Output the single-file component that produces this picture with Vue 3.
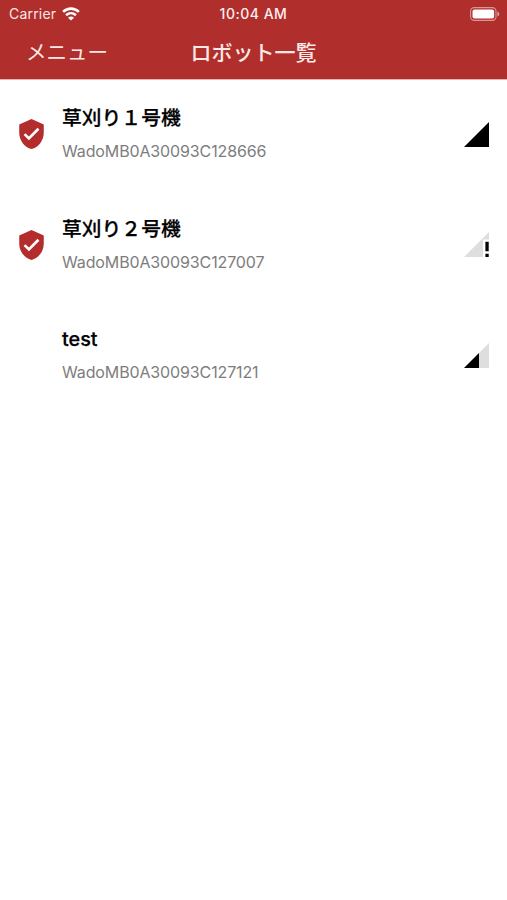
<script setup>
const robots = [
  { name: '草刈り１号機', id: 'WadoMB0A30093C128666', paired: true, signal: 'full' },
  { name: '草刈り２号機', id: 'WadoMB0A30093C127007', paired: true, signal: 'alert' },
  { name: 'test', id: 'WadoMB0A30093C127121', paired: false, signal: 'half' },
]
</script>

<template>
  <div class="screen">
    <header class="header">
      <div class="status">
        <div class="carrier">
          <span>Carrier</span>
          <svg class="wifi" viewBox="0 0 18 14" fill="none" stroke="#fff" stroke-width="2.6">
            <path d="M1.1 4.9C5.7.5 12.3.5 16.9 4.9" />
            <path d="M4.1 8.2C7 5.5 11 5.5 13.9 8.2" />
            <path d="M9 13.6 6 10.8Q9 8.4 12 10.8Z" fill="#fff" stroke="none" />
          </svg>
        </div>
        <span class="time">10:04 AM</span>
        <svg class="battery" viewBox="0 0 30 14">
          <rect x="0.6" y="0.6" width="25.4" height="12.8" rx="3.6" fill="none" stroke="#fff" stroke-opacity="0.5" stroke-width="1.1" />
          <rect x="2.5" y="2.4" width="21.6" height="9.2" rx="2" fill="#fff" />
          <path d="M27.4 4.6Q29.3 5.4 29.3 7T27.4 9.4Z" fill="#fff" fill-opacity="0.55" />
        </svg>
      </div>
      <nav class="nav">
        <span class="menu">メニュー</span>
        <h1 class="title">ロボット一覧</h1>
        <span></span>
      </nav>
    </header>
    <main class="list">
      <div v-for="robot in robots" :key="robot.id" class="row">
        <div class="badge">
          <svg v-if="robot.paired" class="shield" viewBox="3 1 18 22">
            <path d="M12 1 3 5v6c0 5.55 3.84 10.74 9 12 5.16-1.26 9-6.45 9-12V5z" fill="#b22d2b" />
            <path d="m6.9 12.1 3.2 3.1 7-7" fill="none" stroke="#fff" stroke-width="2" />
          </svg>
        </div>
        <div class="text">
          <div class="name">{{ robot.name }}</div>
          <div class="id">{{ robot.id }}</div>
        </div>
        <svg class="signal" viewBox="0 0 25 25">
          <path v-if="robot.signal === 'full'" d="M0 25 25 0V25Z" fill="#000" />
          <template v-else-if="robot.signal === 'alert'">
            <path d="M0 25 25 0V7.5H19V25Z" fill="#dedede" />
            <path d="M21.4 9.8h3.3v9.5h-3.3zM21.4 21.8h3.3V25h-3.3z" fill="#000" />
          </template>
          <template v-else>
            <path d="M0 25 25 0V25Z" fill="#dedede" />
            <path d="M0 25 15 10V25Z" fill="#000" />
          </template>
        </svg>
      </div>
    </main>
  </div>
</template>

<style>
body {
  margin: 0;
  background: #fff;
}
</style>

<style scoped>
.screen {
  min-height: 900px;
  background: #fff;
  font-family: Inter, "Noto Sans CJK JP", sans-serif;
}
.header {
  box-sizing: border-box;
  height: 79px;
  background: #b02e2b;
  color: #fff;
  box-shadow: 0 1px 0 #e3b4b3;
}
.status {
  display: grid;
  grid-template-columns: 1fr auto 1fr;
  align-items: center;
  height: 27px;
  padding: 0 7px 0 7px;
  font-size: 14px;
  line-height: 27px;
}
.carrier {
  display: flex;
  align-items: center;
  gap: 6px;
  padding-left: 2px;
  color: #f9e7e6;
  letter-spacing: 0.2px;
}
.wifi {
  width: 18px;
  height: 14px;
}
.time {
  font-weight: 550;
  font-size: 14px;
  letter-spacing: 0.5px;
  color: #fdeeee;
}
.battery {
  justify-self: end;
  width: 30px;
  height: 14px;
}
.nav {
  display: grid;
  grid-template-columns: 1fr auto 1fr;
  align-items: center;
  height: 52px;
  padding: 0 26px;
  color: #fbe9e8;
}
.menu {
  font-size: 20.5px;
  line-height: 50px;
  font-weight: 400;
}
.title {
  margin: 0;
  font-size: 21px;
  line-height: 50px;
  font-weight: 500;
}
.row {
  display: flex;
  align-items: center;
  box-sizing: border-box;
  height: 110.4px;
  padding: 0 18px 0 19px;
}
.row:last-child {
  height: 111.2px;
}
.badge {
  display: flex;
  width: 43px;
}
.shield {
  width: 25px;
  height: 30px;
}
.text {
  flex: 1;
}
.name {
  font-size: 19.8px;
  font-weight: 500;
  line-height: 30px;
  color: #000;
  -webkit-text-stroke: 0.25px #000;
}
.id {
  margin-top: 4px;
  font-size: 16px;
  letter-spacing: -0.13px;
  line-height: 28px;
  color: #7d7d7d;
}
.signal {
  width: 25px;
  height: 25px;
}
</style>
